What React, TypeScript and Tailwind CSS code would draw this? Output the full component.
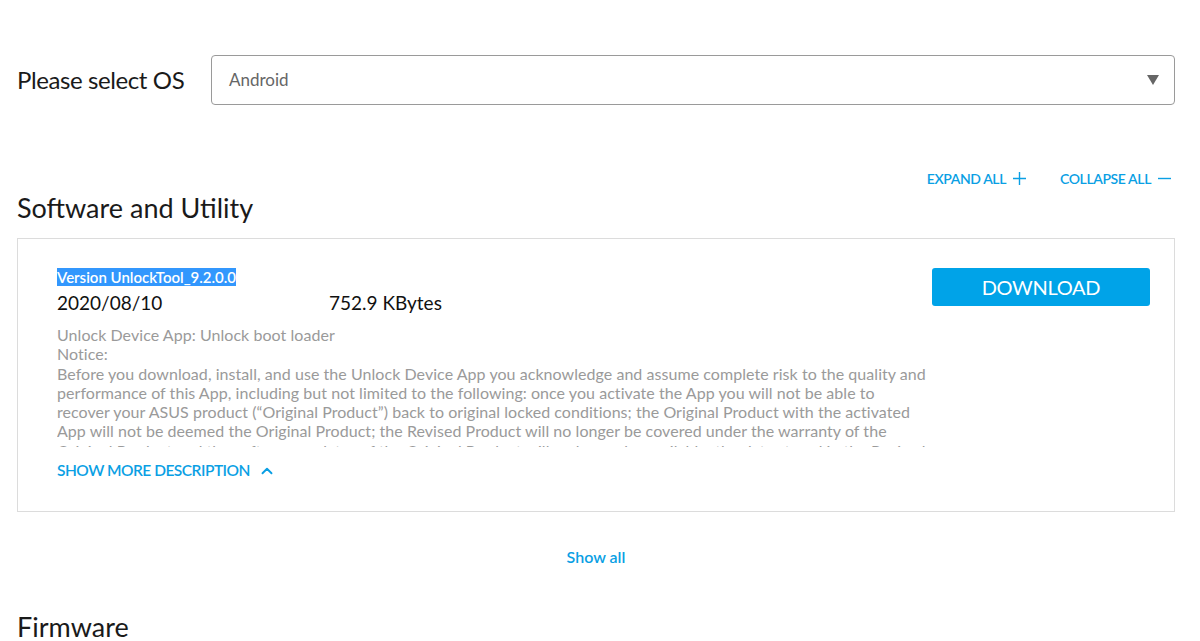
import { ChevronUp } from 'lucide-react'

const notice =
  'Before you download, install, and use the Unlock Device App you acknowledge and assume complete risk to the quality and performance of this App, including but not limited to the following: once you activate the App you will not be able to recover your ASUS product (\u201COriginal Product\u201D) back to original locked conditions; the Original Product with the activated App will not be deemed the Original Product; the Revised Product will no longer be covered under the warranty of the Original Product and the software updates of the Original Product will no longer be available; the data stored in the Revised Product may be lost.'

export default function App() {
  return (
    <div className="min-h-screen bg-white font-['Lato',sans-serif] text-[#222]">
      <div className="pl-[17px] pr-[25px] pt-[55px]">
        <div className="flex items-center">
          <div className="w-[194px] text-[24px] leading-none tracking-[-0.4px] text-[#1a1a1a]">Please select OS</div>
          <div className="flex h-[50px] flex-1 items-center justify-between rounded-[4px] border border-[#9a9a9a] pl-[17px] pr-[15px]">
            <span className="text-[17px] text-[#666]">Android</span>
            <svg width="12" height="10" viewBox="0 0 12 10">
              <path d="M0 0h12L6 10z" fill="#666" />
            </svg>
          </div>
        </div>

        <div className="mt-[63px] flex justify-end gap-[34px] pr-[4px] text-[14px] font-semibold tracking-[-0.4px] text-[#0a9fe4]">
          <button className="flex items-center gap-[7px]">
            EXPAND ALL
            <svg width="13" height="13" viewBox="0 0 13 13">
              <path d="M6.5 0v13M0 6.5h13" stroke="currentColor" strokeWidth="1.4" />
            </svg>
          </button>
          <button className="flex items-center gap-[7px]">
            COLLAPSE ALL
            <svg width="13" height="13" viewBox="0 0 13 13">
              <path d="M0 6.5h13" stroke="currentColor" strokeWidth="1.4" />
            </svg>
          </button>
        </div>

        <h2 className="mt-[1px] text-[27px] leading-[36px] text-[#1a1a1a]">Software and Utility</h2>

        <div className="mt-[12px] border border-[#dcdcdc] pb-[29px] pl-[39px] pr-[24px] pt-[29px]">
          <div className="flex">
            <div className="w-[872px]">
              <div className="text-[15px] font-semibold leading-[18px]">
                <span className="bg-[#3297fd] text-white">Version UnlockTool_9.2.0.0</span>
              </div>
              <div className="mt-[6px] flex text-[19px] leading-[22px] text-[#111]">
                <span className="w-[272px]">2020/08/10</span>
                <span>752.9 KBytes</span>
              </div>
              {/* clipped description, the last line peeks out under the fold */}
              <div className="mt-[11px] h-[122px] overflow-hidden text-[16px] leading-[19.3px] tracking-[0.05px] text-[#9a9a9a]">
                <p>Unlock Device App: Unlock boot loader</p>
                <p>Notice:</p>
                <p>{notice}</p>
              </div>
              <button className="mt-[12px] flex items-center gap-[8px] text-[15.5px] font-semibold tracking-[-0.5px] text-[#0a9fe4]">
                SHOW MORE DESCRIPTION
                <ChevronUp size={18} strokeWidth={2.5} />
              </button>
            </div>
            <div className="ml-auto">
              <button className="h-[38px] w-[218px] rounded-[3px] bg-[#00a3e8] text-[20px] tracking-[-0.3px] text-white">
                DOWNLOAD
              </button>
            </div>
          </div>
        </div>

        <div className="mt-[33px] text-center text-[16px] font-semibold text-[#0a9fe4]">Show all</div>

        <h2 className="mt-[40px] text-[27px] leading-[36px] text-[#1a1a1a]">Firmware</h2>
      </div>
    </div>
  )
}
